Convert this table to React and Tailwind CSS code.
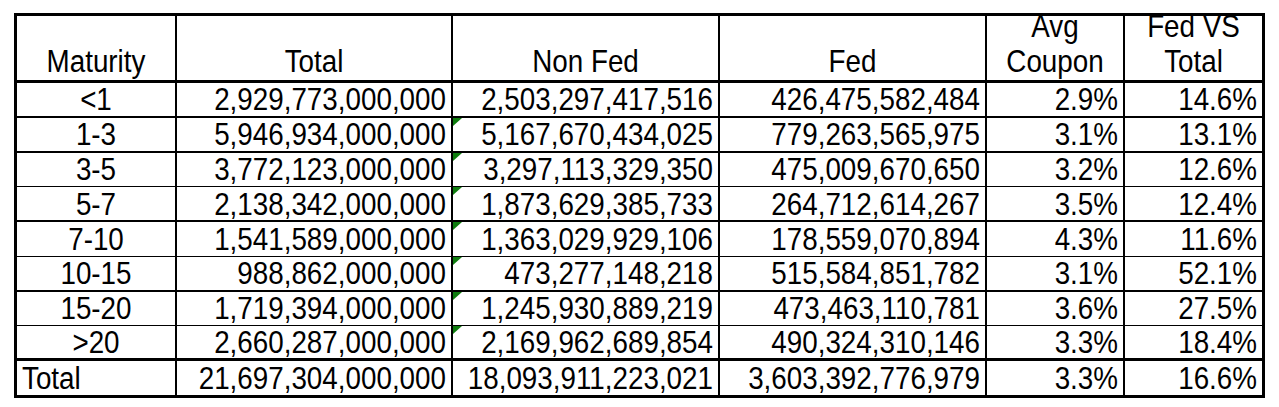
import React from "react";

const rows = [
  ["<1", "2,929,773,000,000", "2,503,297,417,516", "426,475,582,484", "2.9%", "14.6%"],
  ["1-3", "5,946,934,000,000", "5,167,670,434,025", "779,263,565,975", "3.1%", "13.1%"],
  ["3-5", "3,772,123,000,000", "3,297,113,329,350", "475,009,670,650", "3.2%", "12.6%"],
  ["5-7", "2,138,342,000,000", "1,873,629,385,733", "264,712,614,267", "3.5%", "12.4%"],
  ["7-10", "1,541,589,000,000", "1,363,029,929,106", "178,559,070,894", "4.3%", "11.6%"],
  ["10-15", "988,862,000,000", "473,277,148,218", "515,584,851,782", "3.1%", "52.1%"],
  ["15-20", "1,719,394,000,000", "1,245,930,889,219", "473,463,110,781", "3.6%", "27.5%"],
  [">20", "2,660,287,000,000", "2,169,962,689,854", "490,324,310,146", "3.3%", "18.4%"],
];

// row bottom borders (thickness varies a bit in the sheet)
const rowBorders = [
  "border-b-[2.5px]",
  "border-b-[2.5px]",
  "border-b-[1.5px]",
  "border-b-2",
  "border-b-[1.5px]",
  "border-b-2",
  "border-b-[1.5px]",
  "border-b-[3px]",
];

const widths = ["w-[160px]", "w-[276px]", "w-[267px]", "w-[267px]", "w-[138px]", "w-[137px]"];

const Txt = ({ children }) => (
  <span className="inline-block translate-y-[1px] scale-y-110 leading-none">{children}</span>
);

const Flag = () => (
  <svg className="absolute left-0 top-0 z-10 block" width="9" height="8" viewBox="0 0 9 8">
    <polygon points="0,0 9,0 0,8" fill="#0f7d0f" />
  </svg>
);

const Cell = ({ i, children, align = "right", flag = false }) => {
  const last = i === 5;
  const justify =
    align === "center" ? "justify-center" : align === "left" ? "justify-start pl-[5px]" : "justify-end pr-[5px]";
  return (
    <div
      className={`relative flex h-full shrink-0 items-center ${justify} ${widths[i]} ${
        last ? "" : "border-r-2"
      } border-black`}
    >
      {flag && <Flag />}
      <Txt>{children}</Txt>
    </div>
  );
};

const Head = ({ i, lines }) => {
  const last = i === 5;
  return (
    <div
      className={`flex h-full shrink-0 flex-col items-center justify-end ${widths[i]} ${
        last ? "" : "border-r-2"
      } border-black`}
    >
      <div className="origin-bottom scale-y-110 text-center leading-[32px]">
        {lines.map((l) => (
          <div key={l}>{l}</div>
        ))}
      </div>
    </div>
  );
};

export default function App() {
  return (
    <div className="min-h-[407px] w-[1279px] bg-white pl-[14px] pt-[13px] text-[27.8px] text-black [font-family:'Liberation_Sans',Arial,sans-serif]">
      <div className="w-[1251px] border-[3px] border-black">
        {/* header */}
        <div className="flex h-[67px] border-b-[3px] border-black">
          <Head i={0} lines={["Maturity"]} />
          <Head i={1} lines={["Total"]} />
          <Head i={2} lines={["Non Fed"]} />
          <Head i={3} lines={["Fed"]} />
          <Head i={4} lines={["Avg", "Coupon"]} />
          <Head i={5} lines={["Fed VS", "Total"]} />
        </div>

        {rows.map((r, idx) => (
          <div key={r[0]} className={`flex h-[34.75px] border-black ${rowBorders[idx]}`}>
            <Cell i={0} align="center">{r[0]}</Cell>
            <Cell i={1}>{r[1]}</Cell>
            <Cell i={2} flag={idx > 0}>{r[2]}</Cell>
            <Cell i={3}>{r[3]}</Cell>
            <Cell i={4}>{r[4]}</Cell>
            <Cell i={5}>{r[5]}</Cell>
          </div>
        ))}

        {/* total */}
        <div className="flex h-[34px]">
          <Cell i={0} align="left">Total</Cell>
          <Cell i={1}>21,697,304,000,000</Cell>
          <Cell i={2}>18,093,911,223,021</Cell>
          <Cell i={3}>3,603,392,776,979</Cell>
          <Cell i={4}>3.3%</Cell>
          <Cell i={5}>16.6%</Cell>
        </div>
      </div>
    </div>
  );
}
